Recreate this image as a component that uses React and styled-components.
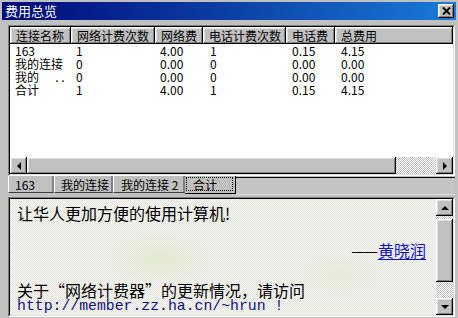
import React from 'react';
import styled, { createGlobalStyle } from 'styled-components';

const GlobalStyle = createGlobalStyle`
  html, body {
    margin: 0;
    padding: 0;
    background: #c0c0c0;
  }
  body {
    font-family: "Noto Sans CJK SC", "Liberation Sans", sans-serif;
    font-size: 12px;
    color: #000;
  }
`;

const raised = `
  box-shadow: inset -1px -1px #000, inset 1px 1px #fff, inset -2px -2px #808080, inset 2px 2px #dfdfdf;
`;

const dither = `
  background-color: #c0c0c0;
  background-image: repeating-conic-gradient(#fff 0 25%, transparent 0 50%);
  background-size: 2px 2px;
`;

const Window = styled.div`
  width: 458px;
  height: 318px;
  box-sizing: border-box;
  padding: 2px 2px 1px 2px;
  background: #c0c0c0;
  display: flex;
  flex-direction: column;
  overflow: hidden;
`;

const TitleBar = styled.div`
  height: 18px;
  flex: none;
  display: flex;
  align-items: center;
  justify-content: space-between;
  padding: 0 2px 0 3px;
  background: linear-gradient(to right, #000a78 0%, #0a3aa0 45%, #1a7ad8 100%);
  color: #fff;
  font-size: 13px;
  line-height: 18px;
`;

const CloseButton = styled.div`
  width: 16px;
  height: 14px;
  background: #c0c0c0;
  display: flex;
  align-items: center;
  justify-content: center;
  ${raised}
`;

const Body = styled.div`
  flex: 1;
  display: flex;
  flex-direction: column;
  padding: 5px 1px 0 6px;
`;

const ListView = styled.div`
  height: 151px;
  flex: none;
  box-sizing: border-box;
  border-style: solid;
  border-width: 1px;
  border-color: #808080 #fff #fff #808080;
  display: flex;
  flex-direction: column;
  background: #fff;
`;

const ListInner = styled.div`
  flex: 1;
  display: flex;
  flex-direction: column;
  border-style: solid;
  border-width: 1px;
  border-color: #000 #dfdfdf #dfdfdf #000;
  min-height: 0;
`;

const cols = '61px 84px 48px 83px 49px 1fr';

const HeaderRow = styled.div`
  display: grid;
  grid-template-columns: ${cols};
  height: 17px;
  flex: none;
`;

const HeaderCell = styled.div`
  background: #c0c0c0;
  ${raised}
  padding: 1px 0 0 6px;
  line-height: 16px;
  white-space: nowrap;
`;

const Rows = styled.div`
  flex: 1;
  background: #fff;
`;

const Row = styled.div`
  display: grid;
  grid-template-columns: ${cols};
  height: 13px;
  line-height: 13px;
`;

const Cell = styled.div`
  padding-left: ${(p) => p.$pad || 5}px;
  white-space: pre;
`;

const HScroll = styled.div`
  height: 17px;
  flex: none;
  display: flex;
`;

const ScrollButton = styled.div`
  width: 17px;
  height: 17px;
  flex: none;
  background: #c0c0c0;
  display: flex;
  align-items: center;
  justify-content: center;
  ${raised}
`;

const HThumb = styled.div`
  width: 369px;
  flex: none;
  background: #c0c0c0;
  ${raised}
`;

const Track = styled.div`
  flex: 1;
  ${dither}
`;

const TabStrip = styled.div`
  height: 20px;
  flex: none;
  display: flex;
  align-items: flex-start;
`;

const Tab = styled.div`
  width: ${(p) => p.$w}px;
  height: 17px;
  flex: none;
  box-sizing: border-box;
  padding-left: ${(p) => p.$pad}px;
  line-height: 17px;
  white-space: pre;
  background: #c0c0c0;
  border-left: 1px solid #fff;
  border-right: 1px solid #808080;
  border-bottom: 1px solid #404040;
  box-shadow: inset -1px 0 #808080;
`;

const ActiveTab = styled.div`
  width: ${(p) => p.$w}px;
  height: 18px;
  flex: none;
  box-sizing: border-box;
  padding: 1px 2px 2px 1px;
  background: #c0c0c0;
  border-right: 1px solid #000;
  border-bottom: 1px solid #000;
`;

const FocusBox = styled.div`
  height: 100%;
  box-sizing: border-box;
  border: 1px dotted #000;
  padding-left: 6px;
  line-height: 14px;
`;

const TabFiller = styled.div`
  flex: 1;
  height: 16px;
  margin-top: 1px;
  border-top: 1px solid #000;
  border-bottom: 1px solid #dfdfdf;
  background: #c4c4c4;
`;

const NotePanel = styled.div`
  margin-top: 1px;
  flex: 1;
  display: flex;
  box-sizing: border-box;
  border-style: solid;
  border-width: 1px;
  border-color: #808080 #fff #fff #808080;
`;

const NoteInner = styled.div`
  flex: 1;
  display: flex;
  border-style: solid;
  border-width: 1px;
  border-color: #000 #dfdfdf #dfdfdf #000;
  min-height: 0;
`;

const NoteText = styled.div`
  flex: 1;
  padding: 5px 10px 0 7px;
  background-color: #f5f5f1;
  background-image:
    radial-gradient(ellipse 60px 30px at 150px 60px, rgba(220, 230, 190, 0.55), transparent),
    radial-gradient(ellipse 50px 25px at 330px 75px, rgba(225, 232, 200, 0.5), transparent),
    repeating-conic-gradient(rgba(200, 200, 190, 0.35) 0 25%, transparent 0 50%);
  background-size: auto, auto, 2px 2px;
  font-size: 16px;
  overflow: hidden;
`;

const Line = styled.div`
  line-height: 18px;
  margin-top: ${(p) => p.$mt || 0}px;
  text-align: ${(p) => p.$align || 'left'};
  white-space: nowrap;
`;

const Author = styled.span`
  color: #1010c8;
  text-decoration: underline;
  text-underline-offset: 2px;
`;

const Url = styled.div`
  font-family: "Liberation Mono", monospace;
  font-size: 14.8px;
  line-height: 15px;
  color: #101080;
  white-space: pre;
`;

const VScroll = styled.div`
  width: 17px;
  flex: none;
  display: flex;
  flex-direction: column;
`;

const VGap = styled.div`
  height: 3px;
  flex: none;
  ${dither}
`;

const VThumb = styled.div`
  height: 63px;
  flex: none;
  background: #c0c0c0;
  ${raised}
`;

const Arrow = ({ dir }) => {
  const pts = {
    left: '5,0 1,4 5,8',
    right: '1,0 5,4 1,8',
    up: '0,5 4,1 8,5',
    down: '0,1 4,5 8,1',
  }[dir];
  const vertical = dir === 'up' || dir === 'down';
  return (
    <svg width={vertical ? 8 : 6} height={vertical ? 6 : 8} viewBox={vertical ? '0 0 8 6' : '0 0 6 8'}>
      <polygon points={pts} fill="#000" />
    </svg>
  );
};

const CloseIcon = () => (
  <svg width="9" height="8" viewBox="0 0 9 8">
    <path d="M1 0.5 L8 7.5 M8 0.5 L1 7.5" stroke="#000" strokeWidth="2" />
  </svg>
);

const headers = ['连接名称', '网络计费次数', '网络费', '电话计费次数', '电话费', '总费用'];

const data = [
  ['163', '1', '4.00', '1', '0.15', '4.15'],
  ['我的连接', '0', '0.00', '0', '0.00', '0.00'],
  ['我的      . .', '0', '0.00', '0', '0.00', '0.00'],
  ['合计', '1', '4.00', '1', '0.15', '4.15'],
];

const cellPad = [5, 5, 5, 7, 6, 6];

export default function App() {
  return (
    <>
      <GlobalStyle />
      <Window>
        <TitleBar>
          <span>费用总览</span>
          <CloseButton>
            <CloseIcon />
          </CloseButton>
        </TitleBar>
        <Body>
          <ListView>
            <ListInner>
              <HeaderRow>
                {headers.map((h) => (
                  <HeaderCell key={h}>{h}</HeaderCell>
                ))}
              </HeaderRow>
              <Rows>
                {data.map((row, i) => (
                  <Row key={i}>
                    {row.map((v, j) => (
                      <Cell key={j} $pad={cellPad[j]}>
                        {v}
                      </Cell>
                    ))}
                  </Row>
                ))}
              </Rows>
              <HScroll>
                <ScrollButton>
                  <Arrow dir="left" />
                </ScrollButton>
                <HThumb />
                <Track />
                <ScrollButton>
                  <Arrow dir="right" />
                </ScrollButton>
              </HScroll>
            </ListInner>
          </ListView>
          <TabStrip>
            <Tab $w={46} $pad={6}>163</Tab>
            <Tab $w={59} $pad={6}>我的连接</Tab>
            <Tab $w={72} $pad={7}>我的连接 2</Tab>
            <ActiveTab $w={51}>
              <FocusBox>合计</FocusBox>
            </ActiveTab>
            <TabFiller />
          </TabStrip>
          <NotePanel>
            <NoteInner>
              <NoteText>
                <Line>让华人更加方便的使用计算机!</Line>
                <Line $mt={19} $align="right">
                  ——<Author>黄晓润</Author>
                </Line>
                <Line $mt={22}>关于“网络计费器”的更新情况，请访问</Line>
                <Url>http://member.zz.ha.cn/~hrun !</Url>
              </NoteText>
              <VScroll>
                <ScrollButton>
                  <Arrow dir="up" />
                </ScrollButton>
                <VGap />
                <VThumb />
                <Track />
                <ScrollButton>
                  <Arrow dir="down" />
                </ScrollButton>
              </VScroll>
            </NoteInner>
          </NotePanel>
        </Body>
      </Window>
    </>
  );
}
